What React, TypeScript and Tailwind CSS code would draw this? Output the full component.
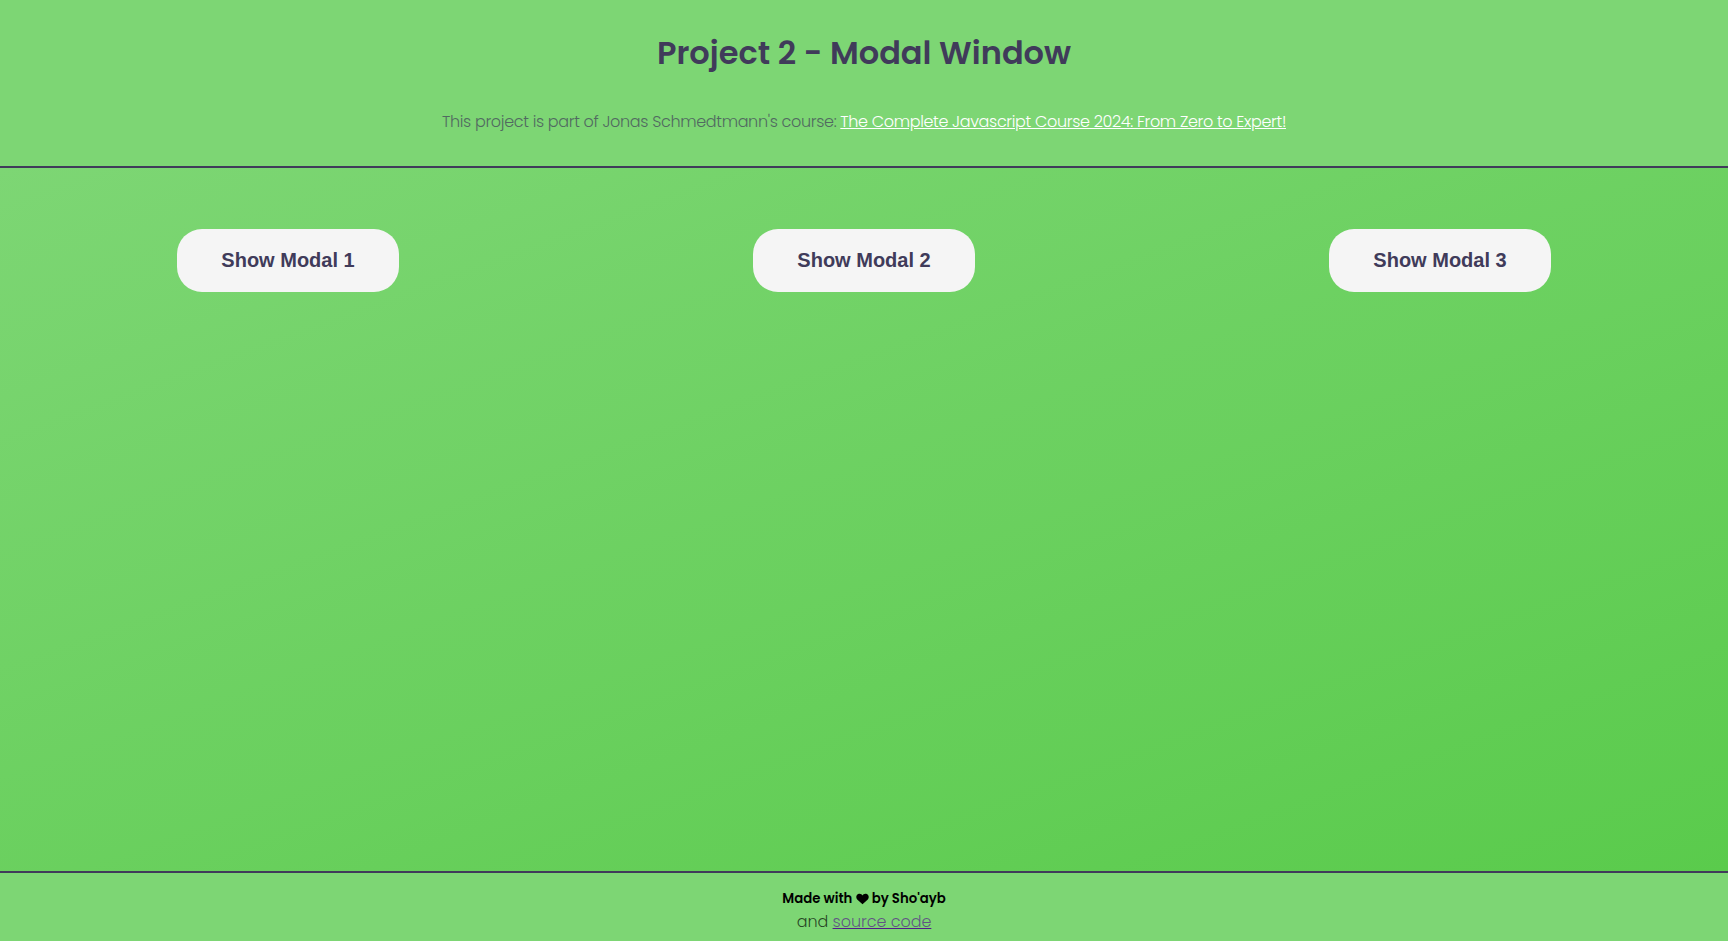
const modals = [1, 2, 3];

export default function App() {
  return (
    <div className="flex h-[941px] w-full bg-white font-['Poppins','Inter',sans-serif]">
      <div className="flex h-full w-[1728px] flex-col">
        <header className="flex h-[168px] shrink-0 flex-col items-center border-b-2 border-[#403b5a] bg-[#7dd674] text-[#403b5a]">
          <h1 className="mt-[29px] h-12 whitespace-nowrap text-[32px] leading-[48px] font-semibold">Project 2 - Modal Window</h1>
          <p className="mt-[33px] h-6 whitespace-nowrap text-base leading-6 font-light tracking-[-0.34px]">
            <span className="opacity-70">This project is part of Jonas Schmedtmann's course: </span>
            <a href="#course" className="text-white underline">The Complete Javascript Course 2024: From Zero to Expert!</a>
          </p>
        </header>
        <main className="grid flex-1 grid-cols-3 items-start justify-items-center bg-linear-[160deg] from-[#7dd674] to-[#5acb4c] pt-[61px]">
          {modals.map((n) => (
            <button key={n} className="h-[63px] w-[222px] rounded-[25px] bg-[#f5f5f5] pb-[2px] font-['Liberation_Sans',sans-serif] text-[20px] font-bold text-[#403b5a]">
              Show Modal {n}
            </button>
          ))}
        </main>
        <footer className="flex h-[70px] shrink-0 flex-col items-center border-t-2 border-[#403b5a] bg-[#7dd674] pt-4 text-black">
          <h5 className="flex h-5 items-center whitespace-pre text-[13.28px] leading-5 font-semibold">
            <span>Made with </span>
            <svg viewBox="0 0 13 12" className="-mr-px ml-px h-3 w-[13px]" fill="currentColor">
              <path d="M6.5 11.2 1.2 6.4C-.5 4.6.2 1.3 2.8.8 4.5.4 5.8 1.2 6.5 2.5 7.2 1.2 8.5.4 10.2.8c2.6.5 3.3 3.8 1.6 5.6Z" />
            </svg>
            <span> by Sho'ayb</span>
          </h5>
          <p className="mt-px whitespace-nowrap text-base leading-6 font-light tracking-[-0.05px] text-black/70">
            and <a href="#source" className="text-[#551a8b]/70 underline decoration-[#551a8b]">source code</a>
          </p>
        </footer>
      </div>
    </div>
  );
}
